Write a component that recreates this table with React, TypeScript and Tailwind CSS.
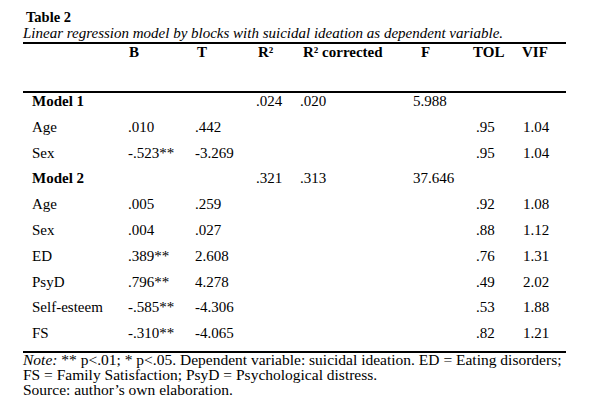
import React from "react";

type Row = {
  label: string;
  bold?: boolean;
  b?: string;
  t?: string;
  r2?: string;
  r2c?: string;
  f?: string;
  tol?: string;
  vif?: string;
};

const rows: Row[] = [
  { label: "Model 1", bold: true, r2: ".024", r2c: ".020", f: "5.988" },
  { label: "Age", b: ".010", t: ".442", tol: ".95", vif: "1.04" },
  { label: "Sex", b: "-.523**", t: "-3.269", tol: ".95", vif: "1.04" },
  { label: "Model 2", bold: true, r2: ".321", r2c: ".313", f: "37.646" },
  { label: "Age", b: ".005", t: ".259", tol: ".92", vif: "1.08" },
  { label: "Sex", b: ".004", t: ".027", tol: ".88", vif: "1.12" },
  { label: "ED", b: ".389**", t: "2.608", tol: ".76", vif: "1.31" },
  { label: "PsyD", b: ".796**", t: "4.278", tol: ".49", vif: "2.02" },
  { label: "Self-esteem", b: "-.585**", t: "-4.306", tol: ".53", vif: "1.88" },
  { label: "FS", b: "-.310**", t: "-4.065", tol: ".82", vif: "1.21" },
];

const cols = "grid grid-cols-[105px_67px_61px_44px_113px_63px_47px_43px]";

export default function App() {
  return (
    <div className="h-[408px] w-[602px] overflow-hidden bg-white pt-[9px] font-['Liberation_Serif',serif] text-black">
      <div className="ml-[23px] w-[543px]">
        {/* Title + caption */}
        <div className="pl-[3px] text-[14.5px] font-bold leading-[16px]">Table 2</div>
        <div className="whitespace-nowrap text-[15px] italic leading-[16px]">
          Linear regression model by blocks with suicidal ideation as dependent variable.
        </div>

        {/* Header */}
        <div className="mt-[1px] border-t-2 border-black">
          <div className={`${cols} h-[47px] text-[15px] font-bold leading-[17px]`}>
            <div />
            <div className="pl-[1px]">B</div>
            <div className="pl-[2px]">T</div>
            <div className="pl-[2px]">R²</div>
            <div className="pl-[3px]">R² corrected</div>
            <div className="pl-[8px]">F</div>
            <div className="-ml-[3px]">TOL</div>
            <div className="-ml-[1px]">VIF</div>
          </div>
        </div>

        {/* Body */}
        <div className="border-y-2 border-black">
          {rows.map((r, i) => (
            <div key={i} className={`${cols} h-[25.8px] text-[15px] leading-[17px]`}>
              <div className={`pl-[9px] ${r.bold ? "font-bold" : ""}`}>{r.label}</div>
              <div>{r.b}</div>
              <div>{r.t}</div>
              <div>{r.r2}</div>
              <div>{r.r2c}</div>
              <div>{r.f}</div>
              <div>{r.tol}</div>
              <div>{r.vif}</div>
            </div>
          ))}
        </div>

        {/* Notes */}
        <div className="-mt-px whitespace-nowrap text-[15.5px] leading-[15px]">
          <div>
            <span className="italic">Note:</span> ** p&lt;.01; * p&lt;.05. Dependent variable: suicidal ideation. ED = Eating disorders;
          </div>
          <div>FS = Family Satisfaction; PsyD = Psychological distress.</div>
          <div>Source: author’s own elaboration.</div>
        </div>
      </div>
    </div>
  );
}
